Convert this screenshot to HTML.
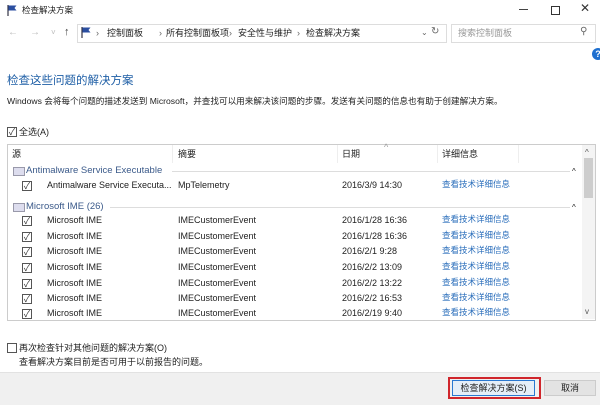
<!DOCTYPE html><html><head><meta charset="utf-8"><style>
body{margin:0;width:600px;height:404px;overflow:hidden;background:#fff;font-family:"Liberation Sans","Noto Sans CJK SC",sans-serif;font-size:9px;color:#222;position:relative}
.a{position:absolute;white-space:nowrap;line-height:12px}
.cb{position:absolute;width:8px;height:8px;border:1px solid #555;background:#fff;font-size:9px;line-height:8px;text-align:center;color:#333}
.lk{color:#2a6ebb;font-size:8.5px;margin-top:-2px}
.g{color:#3b5a8a}
.r{font-size:9px;margin-top:-1px}
</style></head><body>
<svg class="a" style="left:6px;top:4px" width="12" height="12"><path d="M2 1v11" stroke="#334" stroke-width="1.2"/><path d="M2.5 1.5h8l-2 2.5 2 2.5h-8z" fill="#2b4ea0"/></svg>
<div class="a" style="left:22px;top:4px;font-size:8.5px">检查解决方案</div>
<div class="a" style="left:519px;top:9px;width:9px;border-top:1px solid #444"></div>
<div class="a" style="left:551px;top:6px;width:7px;height:7px;border:1px solid #333"></div>
<div class="a" style="left:580px;top:2px;font-size:12px;color:#333">✕</div>
<div class="a" style="left:8px;top:27px;color:#bbb;font-size:10px">←</div>
<div class="a" style="left:30px;top:27px;color:#bbb;font-size:10px">→</div>
<div class="a" style="left:51px;top:27px;color:#bbb;font-size:8px">˅</div>
<div class="a" style="left:64px;top:26px;color:#444;font-size:11px">↑</div>
<div class="a" style="left:77px;top:24px;width:368px;height:17px;border:1px solid #ddd"></div>
<svg class="a" style="left:80px;top:26px" width="12" height="12"><path d="M2 1v11" stroke="#334" stroke-width="1.2"/><path d="M2.5 1.5h8l-2 2.5 2 2.5h-8z" fill="#2b4ea0"/></svg>
<div class="a" style="left:96px;top:27px;color:#666">›</div>
<div class="a" style="left:107px;top:27px">控制面板</div>
<div class="a" style="left:159px;top:27px;color:#666">›</div>
<div class="a" style="left:166px;top:27px">所有控制面板项</div>
<div class="a" style="left:229px;top:27px;color:#666">›</div>
<div class="a" style="left:238px;top:27px">安全性与维护</div>
<div class="a" style="left:297px;top:27px;color:#666">›</div>
<div class="a" style="left:306px;top:27px">检查解决方案</div>
<div class="a" style="left:421px;top:27px;color:#666;font-size:8px">⌄</div>
<div class="a" style="left:431px;top:26px;color:#666;font-size:10px">↻</div>
<div class="a" style="left:451px;top:24px;width:143px;height:17px;border:1px solid #ddd"></div>
<div class="a" style="left:458px;top:27px;color:#999">搜索控制面板</div>
<div class="a" style="left:580px;top:26px;color:#666;font-size:10px;transform:scaleX(-1)">⚲</div>
<div class="a" style="left:592px;top:48px;width:12px;height:12px;border-radius:6px;background:#1e6fcf;color:#fff;font-size:9px;text-align:center;line-height:12px;font-weight:bold">?</div>
<div class="a" style="left:7px;top:74px;font-size:11.5px;line-height:15px;color:#1f5fa6">检查这些问题的解决方案</div>
<div class="a" style="left:7px;top:95px;font-size:8.6px">Windows 会将每个问题的描述发送到 Microsoft，并查找可以用来解决该问题的步骤。发送有关问题的信息也有助于创建解决方案。</div>
<div class="cb" style="left:7px;top:127px">✓</div>
<div class="a" style="left:19px;top:126px">全选(A)</div>
<div class="a" style="left:7px;top:144px;width:587px;height:175px;border:1px solid #ccc"></div>
<div class="a" style="left:172px;top:145px;height:18px;border-left:1px solid #eee"></div>
<div class="a" style="left:337px;top:145px;height:18px;border-left:1px solid #eee"></div>
<div class="a" style="left:437px;top:145px;height:18px;border-left:1px solid #eee"></div>
<div class="a" style="left:518px;top:145px;height:18px;border-left:1px solid #eee"></div>
<div class="a" style="left:12px;top:148px">源</div>
<div class="a" style="left:178px;top:148px">摘要</div>
<div class="a" style="left:342px;top:148px">日期</div>
<div class="a" style="left:384px;top:141px;color:#999;font-size:9px">^</div>
<div class="a" style="left:442px;top:148px">详细信息</div>
<div class="a" style="left:582px;top:145px;width:13px;height:174px;background:#f4f4f4"></div>
<div class="a" style="left:584px;top:158px;width:9px;height:40px;background:#cdcdcd"></div>
<div class="a" style="left:585px;top:147px;font-size:8px;color:#555">^</div>
<div class="a" style="left:585px;top:306px;font-size:8px;color:#555">v</div>
<div class="a" style="left:13px;top:167px;width:10px;height:7px;border:1px solid #99a;background:#dde"></div>
<div class="a g" style="left:26px;top:165px;font-size:9.5px">Antimalware Service Executable</div>
<div class="a" style="left:172px;top:171px;width:398px;border-top:1px solid #ddd"></div>
<div class="a" style="left:572px;top:166px;font-size:8px">^</div>
<div class="a" style="left:13px;top:203px;width:10px;height:7px;border:1px solid #99a;background:#dde"></div>
<div class="a g" style="left:26px;top:201px;font-size:9.5px">Microsoft IME (26)</div>
<div class="a" style="left:110px;top:207px;width:460px;border-top:1px solid #ddd"></div>
<div class="a" style="left:572px;top:202px;font-size:8px">^</div>
<div class="cb" style="left:22px;top:181px">✓</div><div class="a r" style="left:47px;top:180px">Antimalware Service Executa...</div><div class="a r" style="left:178px;top:180px">MpTelemetry</div><div class="a r" style="left:342px;top:180px">2016/3/9 14:30</div><div class="a lk" style="left:442px;top:180px">查看技术详细信息</div>
<div class="cb" style="left:22px;top:216px">✓</div><div class="a r" style="left:47px;top:215px">Microsoft IME</div><div class="a r" style="left:178px;top:215px">IMECustomerEvent</div><div class="a r" style="left:342px;top:215px">2016/1/28 16:36</div><div class="a lk" style="left:442px;top:215px">查看技术详细信息</div>
<div class="cb" style="left:22px;top:232px">✓</div><div class="a r" style="left:47px;top:231px">Microsoft IME</div><div class="a r" style="left:178px;top:231px">IMECustomerEvent</div><div class="a r" style="left:342px;top:231px">2016/1/28 16:36</div><div class="a lk" style="left:442px;top:231px">查看技术详细信息</div>
<div class="cb" style="left:22px;top:247px">✓</div><div class="a r" style="left:47px;top:246px">Microsoft IME</div><div class="a r" style="left:178px;top:246px">IMECustomerEvent</div><div class="a r" style="left:342px;top:246px">2016/2/1 9:28</div><div class="a lk" style="left:442px;top:246px">查看技术详细信息</div>
<div class="cb" style="left:22px;top:263px">✓</div><div class="a r" style="left:47px;top:262px">Microsoft IME</div><div class="a r" style="left:178px;top:262px">IMECustomerEvent</div><div class="a r" style="left:342px;top:262px">2016/2/2 13:09</div><div class="a lk" style="left:442px;top:262px">查看技术详细信息</div>
<div class="cb" style="left:22px;top:279px">✓</div><div class="a r" style="left:47px;top:278px">Microsoft IME</div><div class="a r" style="left:178px;top:278px">IMECustomerEvent</div><div class="a r" style="left:342px;top:278px">2016/2/2 13:22</div><div class="a lk" style="left:442px;top:278px">查看技术详细信息</div>
<div class="cb" style="left:22px;top:294px">✓</div><div class="a r" style="left:47px;top:293px">Microsoft IME</div><div class="a r" style="left:178px;top:293px">IMECustomerEvent</div><div class="a r" style="left:342px;top:293px">2016/2/2 16:53</div><div class="a lk" style="left:442px;top:293px">查看技术详细信息</div>
<div class="cb" style="left:22px;top:309px">✓</div><div class="a r" style="left:47px;top:308px">Microsoft IME</div><div class="a r" style="left:178px;top:308px">IMECustomerEvent</div><div class="a r" style="left:342px;top:308px">2016/2/19 9:40</div><div class="a lk" style="left:442px;top:308px">查看技术详细信息</div>
<div class="cb" style="left:7px;top:343px"></div>
<div class="a" style="left:19px;top:342px">再次检查针对其他问题的解决方案(O)</div>
<div class="a" style="left:19px;top:356px">查看解决方案目前是否可用于以前报告的问题。</div>
<div class="a" style="left:0;top:372px;width:600px;height:32px;background:#f0f0f0;border-top:1px solid #e2e2e2"></div>
<div class="a" style="left:448px;top:377px;width:89px;height:18px;border:2px solid #d0262c"></div>
<div class="a" style="left:452px;top:380px;width:81px;height:14px;border:1px solid #2a78d0;background:#e5eef8;text-align:center;line-height:14px">检查解决方案(S)</div>
<div class="a" style="left:544px;top:380px;width:50px;height:14px;border:1px solid #ccc;background:#e3e3e3;text-align:center;line-height:14px">取消</div>
</body></html>
